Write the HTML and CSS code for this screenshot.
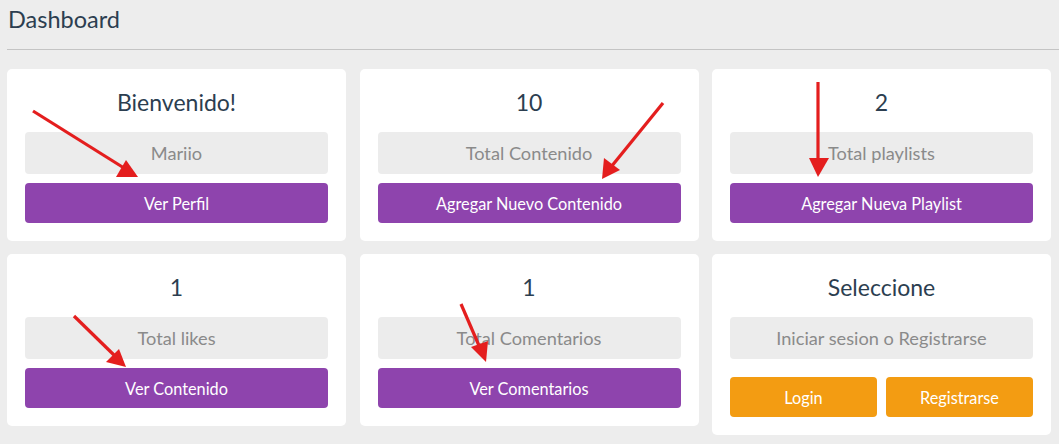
FILE: index.html
```html
<!DOCTYPE html>
<html lang="es">
<head>
<meta charset="utf-8">
<title>Dashboard</title>
<link rel="stylesheet" href="styles.css">
</head>
<body>
<div class="page">
  <h1 class="page-title">Dashboard</h1>
  <hr class="divider">
  <div class="grid">
    <div class="card">
      <h2 class="card-title">Bienvenido!</h2>
      <div class="info">Mariio</div>
      <button class="btn btn-purple">Ver Perfil</button>
    </div>
    <div class="card">
      <h2 class="card-title">10</h2>
      <div class="info">Total Contenido</div>
      <button class="btn btn-purple">Agregar Nuevo Contenido</button>
    </div>
    <div class="card">
      <h2 class="card-title">2</h2>
      <div class="info">Total playlists</div>
      <button class="btn btn-purple">Agregar Nueva Playlist</button>
    </div>
    <div class="card">
      <h2 class="card-title">1</h2>
      <div class="info">Total likes</div>
      <button class="btn btn-purple">Ver Contenido</button>
    </div>
    <div class="card">
      <h2 class="card-title">1</h2>
      <div class="info">Total Comentarios</div>
      <button class="btn btn-purple">Ver Comentarios</button>
    </div>
    <div class="card">
      <h2 class="card-title">Seleccione</h2>
      <div class="info">Iniciar sesion o Registrarse</div>
      <div class="btn-row">
        <button class="btn btn-orange">Login</button>
        <button class="btn btn-orange">Registrarse</button>
      </div>
    </div>
  </div>
  <svg class="arrows" width="1059" height="444" viewBox="0 0 1059 444" aria-hidden="true">
    <g stroke="#e41e1e" stroke-width="3.2" stroke-linecap="butt" fill="#e41e1e">
      <line x1="33" y1="111" x2="124" y2="168"/>
      <polygon stroke="none" points="138,177 116,177 126,160"/>
      <line x1="663" y1="103" x2="611" y2="167"/>
      <polygon stroke="none" points="602,179 604,158 620,170"/>
      <line x1="818" y1="82" x2="818" y2="160"/>
      <polygon stroke="none" points="809,158 829,158 818,177"/>
      <line x1="74" y1="316" x2="115" y2="356"/>
      <polygon stroke="none" points="126,367 106,362 119,349"/>
      <line x1="461" y1="304" x2="480" y2="348"/>
      <polygon stroke="none" points="486,362 471,347 488,341"/>
    </g>
  </svg>
</div>
</body>
</html>
```

FILE: styles.css
```css
html, body {
  margin: 0;
  padding: 0;
  background: #ededed;
}

body {
  font-family: Lato, "Noto Sans", "Liberation Sans", sans-serif;
  color: #2c3e50;
}

.page {
  position: relative;
  width: 1059px;
  height: 444px;
  overflow: hidden;
}

.page-title {
  margin: 0;
  padding: 5px 8px 0;
  font-size: 23.5px;
  line-height: 28px;
  font-weight: 400;
}

.divider {
  margin: 16px 0 0 7px;
  border: 0;
  border-top: 1px solid #c4c4c4;
  height: 0;
}

.grid {
  display: grid;
  grid-template-columns: repeat(3, 1fr);
  column-gap: 13.5px;
  row-gap: 13px;
  padding: 19px 8px 0 7px;
  align-items: start;
}

.card {
  background: #fff;
  border-radius: 5px;
  padding: 18px;
  display: flex;
  flex-direction: column;
}

.card-title {
  margin: 0 0 15px;
  font-size: 23px;
  line-height: 30px;
  font-weight: 400;
  text-align: center;
}

.info {
  height: 42px;
  line-height: 42px;
  background: #ececec;
  border-radius: 4px;
  text-align: center;
  color: #8a8a8a;
  font-size: 18.2px;
}

.btn {
  font-family: inherit;
  border: 0;
  border-radius: 4px;
  height: 40px;
  color: #fff;
  font-size: 16.3px;
  padding: 0;
  cursor: pointer;
}

.btn-purple {
  margin-top: 9px;
  background: #8e44ad;
}

.btn-row {
  margin-top: 18px;
  display: flex;
  gap: 9px;
}

.btn-orange {
  flex: 1;
  background: #f39c12;
}

.arrows {
  position: absolute;
  left: 0;
  top: 0;
  pointer-events: none;
}
```
